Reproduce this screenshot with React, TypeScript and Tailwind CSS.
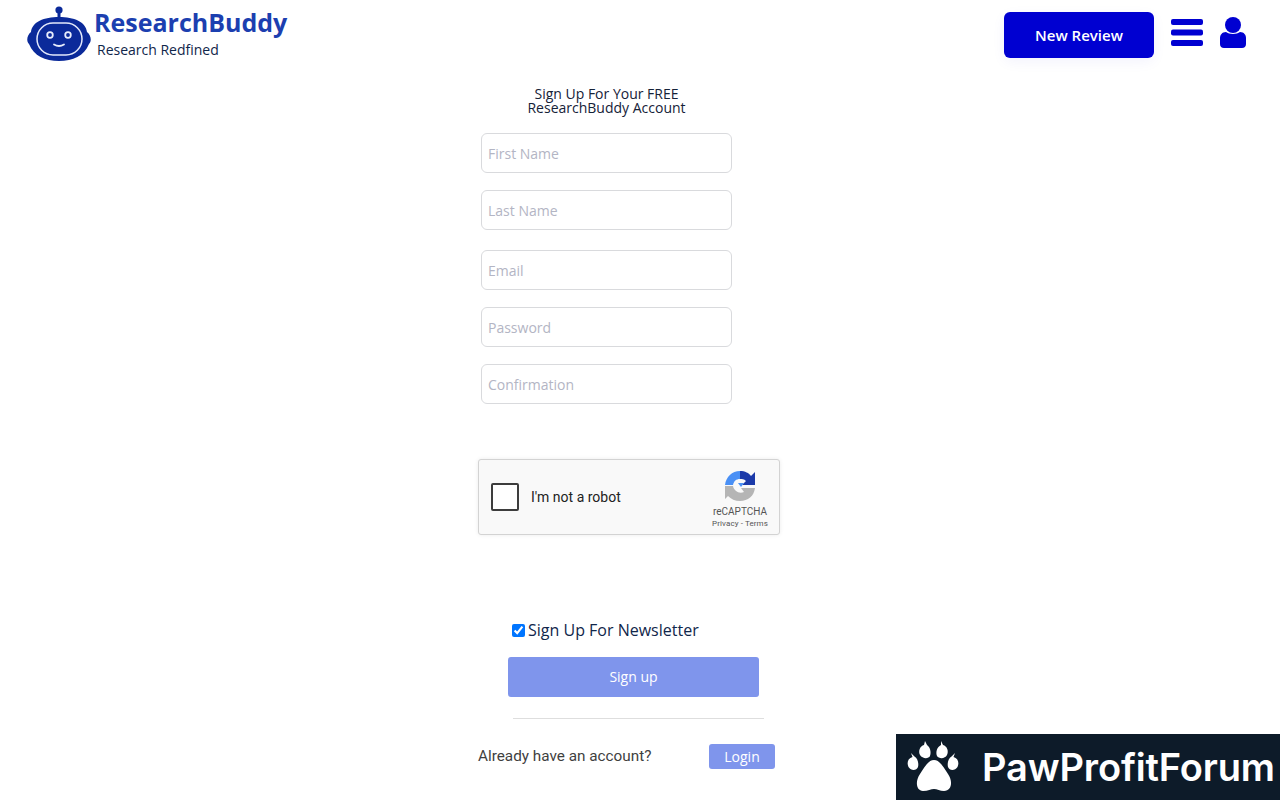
const RobotLogo = () => (
  <svg width="65" height="57" viewBox="0 0 65 57" className="shrink-0">
    <rect x="30.5" y="4" width="3" height="9" fill="#0b2a9a" />
    <circle cx="32" cy="4" r="3.6" fill="#0b2a9a" />
    <path d="M4 26 C5 16 17 11 32 11 C47 11 59 16 60 26 C64 29 65 35 62 38 C57 50 46 55 32 55 C18 55 7 50 2 38 C-1 35 0 29 4 26 Z" fill="#0b2a9a" />
    <rect x="10" y="17" width="45" height="32" rx="16" fill="none" stroke="#e3e9fb" strokeWidth="1.5" />
    <circle cx="23" cy="29" r="2.8" fill="none" stroke="#e8edfc" strokeWidth="1.8" />
    <circle cx="41" cy="29" r="2.8" fill="none" stroke="#e8edfc" strokeWidth="1.8" />
    <path d="M27 38.5 Q32 41.5 37 38.5" fill="none" stroke="#e8edfc" strokeWidth="1.8" strokeLinecap="round" />
  </svg>
);

const BarsIcon = () => (
  <svg width="32" height="27" viewBox="0 0 32 27" fill="#0000d1" className="shrink-0">
    <rect x="0" y="0" width="32" height="6" rx="2" />
    <rect x="0" y="10.5" width="32" height="6" rx="2" />
    <rect x="0" y="21" width="32" height="6" rx="2" />
  </svg>
);

const UserIcon = () => (
  <svg width="26" height="31" viewBox="0 0 26 31" fill="#0000d1" className="shrink-0">
    <circle cx="13" cy="8" r="8" />
    <path d="M6 15 C9 17.500 17 17.500 20 15 C24 15 26 18 26 21 L26 27 C26 29.500 24.500 31 22 31 L4 31 C1.500 31 0 29.500 0 27 L0 21 C0 18 2 15 6 15 Z" />
  </svg>
);

const RecaptchaLogo = () => (
  <svg width="30" height="30" viewBox="0 0 30 30">
    <path d="M0 14 C1 6 7 0 15 0 L15 8 C11 8 9 10 8 14 Z" fill="#4a90f5" />
    <path d="M15 0 C20 0 24 2 26 5 L30 1 L30 14 L17 14 L21 10 C19 8 17 8 15 8 Z" fill="#1c3aa9" />
    <path d="M0 15 L8 15 C9 20 14 23 19 21 L16 17 L30 17 C29 25 23 30 15 30 C10 30 6 28 3 25 L0 28 Z" fill="#b5b5b5" />
    <path d="M13 12 L19 12 L16 16 Z" fill="#4a90f5" />
  </svg>
);

const PawIcon = () => (
  <svg width="52" height="53" viewBox="0 0 52 53" fill="#fff" className="shrink-0">
    <path d="M27 19 C33 19 37 27 41 33 C46 40 45 50 37 50 C33 50 30 48 27 48 C24 48 21 50 16 50 C9 50 8 40 13 33 C17 27 21 19 27 19 Z" />
    <path d="M5.500 16 L4 12 L7.500 15.500 C10.500 17 12 22 11 26 C9.500 30 4 30 1.500 26 C-0.500 22 1 17 5.500 16 Z" />
    <path d="M46.500 16 L48 12 L44.500 15.500 C41.500 17 40 22 41 26 C42.500 30 48 30 50.500 26 C52.500 22 51 17 46.500 16 Z" />
    <path d="M17 4 L18 0 L20 4 C23 6 24.500 11 23 15 C21.500 18 15.500 18 13 14 C11 10 13 5 17 4 Z" />
    <path d="M34 4 L34 0 L36 4 C40 5 42 10 40 14 C38 18 32 18 30 15 C28.500 11 30 6 34 4 Z" />
  </svg>
);

const Field = ({ placeholder, className }: { placeholder: string; className: string }) => (
  <input
    placeholder={placeholder}
    className={`block w-[251px] h-10 ml-[3px] px-[6px] border border-[#d9dadd] rounded-md bg-white text-sm outline-none placeholder:text-[#b3b5c4] ${className}`}
  />
);

export default function App() {
  return (
    <div className="relative min-h-[800px] bg-white overflow-hidden font-['Open_Sans',sans-serif] text-[#152238]">
      <header className="flex items-start justify-between h-[87px] pl-[27px] pr-[34px]">
        <div className="flex pt-[6px]">
          <RobotLogo />
          <div className="ml-[2px]">
            <div className="text-[25px] leading-[32px] font-bold text-[#1c3fb0]">ResearchBuddy</div>
            <div className="ml-[3px] mt-[2px] text-sm leading-5 text-[#10264a]">Research Redfined</div>
          </div>
        </div>
        <div className="flex items-center pt-[12px]">
          <button className="w-[150px] h-[46px] rounded-md bg-[#0000d1] text-white text-[15px] font-semibold shadow-[0_4px_14px_rgba(0,0,209,0.05)]">
            New Review
          </button>
          <div className="ml-[17px] -mt-[5px]">
            <BarsIcon />
          </div>
          <div className="ml-[17px] -mt-[5px]">
            <UserIcon />
          </div>
        </div>
      </header>

      <main className="ml-[478px] w-[304px]">
        <h1 className="w-[251px] ml-[3px] text-center text-sm leading-[14px] font-normal">
          Sign Up For Your FREE
          <br />
          ResearchBuddy Account
        </h1>
        <Field placeholder="First Name" className="mt-[18px]" />
        <Field placeholder="Last Name" className="mt-[17px]" />
        <Field placeholder="Email" className="mt-5" />
        <Field placeholder="Password" className="mt-[17px]" />
        <Field placeholder="Confirmation" className="mt-[17px]" />

        <div className="flex items-center h-[76px] w-[302px] mt-[55px] border border-[#d3d3d3] rounded-[3px] bg-[#f9f9f9] shadow-[0_0_4px_rgba(0,0,0,0.08)] font-['Roboto',sans-serif]">
          <div className="w-7 h-7 ml-[12px] border-2 border-[#3d3d3d] rounded-[2px] bg-white" />
          <span className="ml-3 text-sm text-[#222]">I'm not a robot</span>
          <div className="ml-auto mr-[10px] w-[58px] flex flex-col items-center pt-[7px]">
            <RecaptchaLogo />
            <div className="mt-[5px] text-[10px] leading-[12px] text-[#555]">reCAPTCHA</div>
            <div className="text-[8px] leading-[12px] tracking-[0.1px] text-[#555] whitespace-nowrap">Privacy - Terms</div>
          </div>
        </div>

        <label className="flex items-center mt-[84px] ml-[34px] h-[22px] text-base leading-[22px] text-[#10264a]">
          <input type="checkbox" defaultChecked className="w-[13px] h-[13px] m-0 accent-[#0075ff]" />
          <span className="ml-[3px]">Sign Up For Newsletter</span>
        </label>
        <button className="block w-[251px] h-10 mt-4 ml-[30px] rounded-[3px] bg-[#7f95ec] text-white text-sm">
          Sign up
        </button>
        <div className="w-[251px] ml-[35px] mt-[21px] border-t border-[#dedede]" />
        <div className="flex items-center mt-[25px] h-[25px]">
          <span className="text-[15.300px] text-[#3f3f3f] font-['Roboto',sans-serif]">Already have an account?</span>
          <button className="ml-auto mr-[7px] w-[66px] h-[25px] rounded-[3px] bg-[#7f95ec] text-white text-sm">
            Login
          </button>
        </div>
      </main>

      <div className="absolute right-0 bottom-0 flex items-center w-[384px] h-[66px] pl-[11px] bg-[#0d1b29]">
        <PawIcon />
        <span className="ml-[23px] text-[38px] leading-none font-semibold tracking-[-0.15px] text-white whitespace-nowrap font-['Inter',sans-serif]">PawProfitForum</span>
      </div>
    </div>
  );
}
